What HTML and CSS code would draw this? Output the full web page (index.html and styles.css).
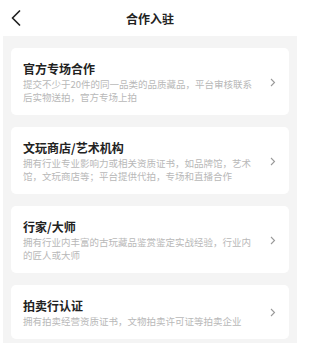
FILE: index.html
```html
<!DOCTYPE html>
<html lang="zh-CN">
<head>
<meta charset="utf-8">
<title>合作入驻</title>
<link rel="stylesheet" href="styles.css">
</head>
<body>
<header class="nav">
  <span class="back">
    <svg width="10" height="16" viewBox="0 0 10 16"><polyline points="8.5,1 1.5,8 8.5,15" fill="none" stroke="#222" stroke-width="1.7" stroke-linecap="round" stroke-linejoin="round"/></svg>
  </span>
  <h1 class="nav-title">合作入驻</h1>
</header>
<main class="list">
  <div class="card">
    <div class="text">
      <div class="title">官方专场合作</div>
      <div class="desc">提交不少于20件的同一品类的品质藏品，平台审核联系后实物送拍，官方专场上拍</div>
    </div>
    <svg class="arrow" width="6" height="9" viewBox="0 0 6 9"><polyline points="1,1 4.5,4.5 1,8" fill="none" stroke="#9a9a9a" stroke-width="1.1"/></svg>
  </div>
  <div class="card">
    <div class="text">
      <div class="title">文玩商店/艺术机构</div>
      <div class="desc">拥有行业专业影响力或相关资质证书，如品牌馆，艺术馆，文玩商店等；平台提供代拍，专场和直播合作</div>
    </div>
    <svg class="arrow" width="6" height="9" viewBox="0 0 6 9"><polyline points="1,1 4.5,4.5 1,8" fill="none" stroke="#9a9a9a" stroke-width="1.1"/></svg>
  </div>
  <div class="card">
    <div class="text">
      <div class="title">行家/大师</div>
      <div class="desc">拥有行业内丰富的古玩藏品鉴赏鉴定实战经验，行业内的匠人或大师</div>
    </div>
    <svg class="arrow" width="6" height="9" viewBox="0 0 6 9"><polyline points="1,1 4.5,4.5 1,8" fill="none" stroke="#9a9a9a" stroke-width="1.1"/></svg>
  </div>
  <div class="card">
    <div class="text">
      <div class="title">拍卖行认证</div>
      <div class="desc">拥有拍卖经营资质证书，文物拍卖许可证等拍卖企业</div>
    </div>
    <svg class="arrow" width="6" height="9" viewBox="0 0 6 9"><polyline points="1,1 4.5,4.5 1,8" fill="none" stroke="#9a9a9a" stroke-width="1.1"/></svg>
  </div>
</main>
</body>
</html>
```
FILE: styles.css
```css
* { box-sizing: border-box; }
html, body { margin: 0; padding: 0; background: #fff; }
body {
  font-family: "Noto Sans CJK SC", "Noto Sans", sans-serif;
  color: #222;
  width: 300px;
}
.nav {
  height: 36px;
  display: flex;
  align-items: center;
  justify-content: center;
  position: relative;
}
.back {
  position: absolute;
  left: 11px;
  top: 10px;
  width: 10px;
  height: 16px;
  display: flex;
}
.nav-title {
  margin: 0;
  font-size: 12px;
  font-weight: 700;
  line-height: 16px;
  padding-top: 2px;
  color: #222;
}
.list {
  margin: 0 3px;
  background: #f4f4f4;
  padding: 12px 8px 4px;
  display: flex;
  flex-direction: column;
  gap: 12px;
}
.card {
  background: #fff;
  border-radius: 5px;
  padding: 12px 13px 11px 12px;
  display: flex;
  align-items: center;
  gap: 15px;
}
.text { flex: 1; min-width: 0; }
.title {
  font-size: 12px;
  font-weight: 700;
  line-height: 18px;
  color: #222;
}
.desc {
  font-size: 9.5px;
  line-height: 13px;
  color: #b8b8b8;
}
.arrow { flex: none; }
```
